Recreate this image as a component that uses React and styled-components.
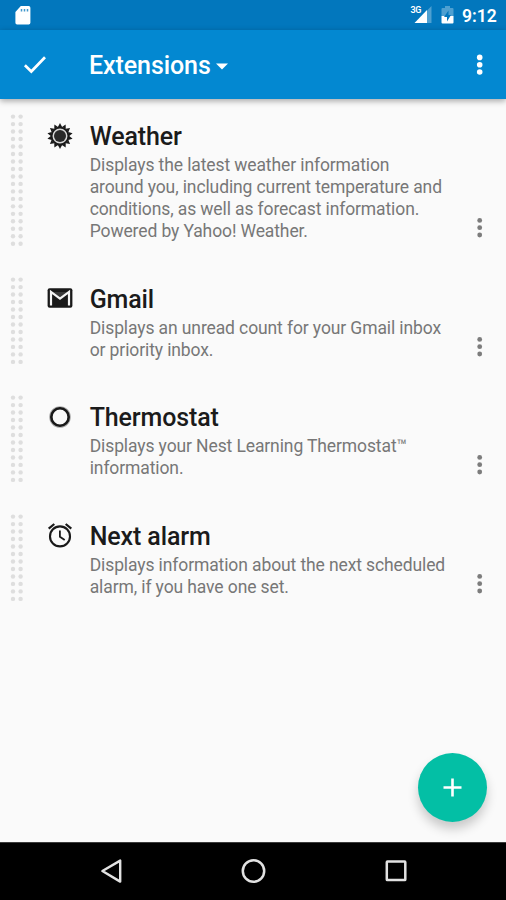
import React from 'react';
import styled, { createGlobalStyle } from 'styled-components';

const GlobalStyle = createGlobalStyle`
  * {
    box-sizing: border-box;
  }

  body {
    margin: 0;
    background: #fafafa;
    font-family: Roboto, sans-serif;
  }

  svg {
    display: block;
  }
`;

const Screen = styled.div`
  display: flex;
  flex-direction: column;
  width: 506px;
  height: 900px;
  overflow: hidden;
  background: #fafafa;
`;

const StatusBar = styled.header`
  display: flex;
  align-items: center;
  justify-content: space-between;
  height: 30px;
  padding: 0 9px 0 14px;
  background: #0277bd;
  color: #fff;
`;

const StatusIcons = styled.div`
  display: flex;
  align-items: center;
`;

const NetworkLabel = styled.span`
  align-self: flex-start;
  margin-right: -7px;
  padding-top: 7px;
  font-size: 9px;
  font-weight: 600;
  line-height: 9px;
  letter-spacing: -0.4px;
`;

const BatterySlot = styled.div`
  margin-left: 9px;
`;

const Clock = styled.span`
  width: 35px;
  margin-left: 8px;
  padding-top: 2px;
  font-size: 17.5px;
  font-weight: 600;
  line-height: 30px;
  white-space: nowrap;
`;

const AppBar = styled.nav`
  display: flex;
  align-items: center;
  height: 69px;
  padding: 0 14px 0 22px;
  background: #0388d1;
  color: #fff;
  box-shadow: 0 2px 6px rgba(0, 0, 0, 0.34);
  z-index: 1;
`;

const IconButton = styled.button`
  display: flex;
  align-items: center;
  justify-content: center;
  padding: 0;
  border: none;
  background: none;
  color: inherit;
  cursor: pointer;
`;

const Dropdown = styled.button`
  display: flex;
  align-items: center;
  gap: 5px;
  margin: 2px auto 0 41px;
  padding: 0;
  border: none;
  background: none;
  color: inherit;
  font-family: inherit;
  font-size: 25px;
  font-weight: 500;
  line-height: 32px;
  letter-spacing: -0.08px;
  cursor: pointer;
`;

const List = styled.ul`
  flex: 1;
  margin: 0;
  padding: 0;
  list-style: none;
`;

const Row = styled.li`
  display: flex;
  height: ${(props) => 74.6 + props.$lines * 22}px;
  padding: 15px 14px 15.6px 10px;
`;

const IconSlot = styled.div`
  display: flex;
  align-items: center;
  justify-content: center;
  width: 28px;
  height: 28px;
  margin: 7.6px 16px 0 21.7px;
  color: #191919;
`;

const Details = styled.div`
  flex: 1;
  padding-top: 7px;
`;

const Title = styled.h2`
  margin: 0;
  font-size: 25px;
  font-weight: 500;
  line-height: 32px;
  letter-spacing: -0.12px;
  color: #1b1b1b;
`;

const Description = styled.p`
  margin: 1px 0 0;
  font-size: 17.5px;
  line-height: 22px;
  letter-spacing: -0.11px;
  color: #777;
  white-space: pre;
`;

const RowMenu = styled(IconButton)`
  align-self: flex-end;
  margin-bottom: 6px;
  color: #7c7c7c;
`;

const AddButton = styled(IconButton)`
  align-self: flex-end;
  flex-shrink: 0;
  width: 69px;
  height: 69px;
  margin: 0 19px 20px 0;
  border-radius: 50%;
  background: #03bfa5;
  color: #fff;
  box-shadow: 0 7px 11px rgba(0, 0, 0, 0.2);
`;

const NavBar = styled.footer`
  display: flex;
  justify-content: space-between;
  height: 58px;
  padding: 14px 96px 0;
  background: #000;
  border-top: 1px solid #3c3c3c;
  color: #e2e2e2;
`;

const SdCardIcon = () => (
  <svg width="18" height="20" viewBox="0 0 18 20">
    <path
      d="M6.8 1h7.9a1.7 1.7 0 0 1 1.7 1.7v15a1.7 1.7 0 0 1-1.7 1.7H3.1a1.7 1.7 0 0 1-1.7-1.7V7z"
      fill="#fff"
    />
    <path d="M7.5 4v2.6M10.5 4v2.6M13.5 4v2.6" stroke="#0277bd" strokeWidth="1.5" opacity=".75" />
  </svg>
);

const SignalIcon = () => (
  <svg width="18" height="18" viewBox="0 0 18 18">
    <path d="M13 4.5 17.5 0v17H13z" fill="#fff" opacity=".3" />
    <path d="M.5 17 13 4v13z" fill="#fff" />
  </svg>
);

const BatteryIcon = () => (
  <svg width="13" height="18" viewBox="0 0 13 18">
    <path d="M4 0h5v2h2.5q1 0 1 1v7H.5V3q0-1 1-1H4z" fill="#fff" opacity=".3" />
    <path d="M.5 10h12v6.5q0 1-1 1h-10q-1 0-1-1z" fill="#fff" />
    <path d="M7.5 4.5 3 11h3v4.5L10 9H7.5z" fill="#0277bd" />
  </svg>
);

const CheckIcon = () => (
  <svg width="26" height="26" viewBox="0 0 26 26" fill="none" stroke="#fff" strokeWidth="2.7">
    <path d="M2.9 13.3 9.3 19.5 23 5.2" />
  </svg>
);

const CaretIcon = () => (
  <svg width="12" height="8" viewBox="0 0 12 8">
    <path d="M0 1.4h12L6 7.4z" fill="currentColor" />
  </svg>
);

const MoreIcon = ({ radius = 2.4 }) => (
  <svg width="24" height="24" viewBox="0 0 24 24" fill="currentColor">
    <circle cx="11.7" cy="4.4" r={radius} />
    <circle cx="11.7" cy="11.7" r={radius} />
    <circle cx="11.7" cy="19" r={radius} />
  </svg>
);

const Grip = ({ count }) => (
  <svg width="14" height={count * 7.5} fill="#dedede">
    {Array.from({ length: count }, (_, i) => (
      <g key={i}>
        <circle cx="3" cy={2.6 + i * 7.48} r="2.2" />
        <circle cx="10.6" cy={2.6 + i * 7.48} r="2.2" />
      </g>
    ))}
  </svg>
);

const SunIcon = () => (
  <svg width="26" height="26" viewBox="-13 -13 26 26">
    {Array.from({ length: 14 }, (_, i) => (
      <path
        key={i}
        d="M-2.1-9 0-12.9 2.1-9z"
        fill="#191919"
        transform={`rotate(${(i * 360) / 14})`}
      />
    ))}
    <circle r="8.5" fill="#d8d8d8" stroke="#191919" strokeWidth="2" />
    <circle r="6" fill="#292929" />
  </svg>
);

const GmailIcon = () => (
  <svg width="26" height="22" viewBox="0 0 26 22">
    <rect x=".6" y="1.2" width="24.8" height="19.6" rx="2" fill="#191919" />
    <path d="M5 5h16L13 11z" fill="#3a3a3a" />
    <path
      d="M4 18.6V4.9L13 11.7l9-6.8v13.7"
      fill="none"
      stroke="#f5f5f5"
      strokeWidth="2.2"
    />
  </svg>
);

const ThermostatIcon = () => (
  <svg width="26" height="26" viewBox="0 0 26 26" fill="none">
    <circle cx="13" cy="13" r="9.3" stroke="#aaa" strokeWidth="3" />
    <circle cx="13" cy="13" r="8.7" stroke="#191919" strokeWidth="2.6" />
  </svg>
);

const AlarmIcon = () => (
  <svg width="26" height="26" viewBox="0 0 26 26" fill="none" stroke="currentColor" strokeWidth="2.1">
    <circle cx="13" cy="14.4" r="10" />
    <path d="M1.7 6.7 7.3 2M24.3 6.7 18.7 2" strokeWidth="2.2" />
    <path d="M12.9 8.6v6.2l4.8 3.3" strokeWidth="1.8" />
  </svg>
);

const PlusIcon = () => (
  <svg width="20" height="20" viewBox="0 0 20 20" stroke="#fff" strokeWidth="2.6">
    <path d="M9.5 .5v18M.5 9.5h18" />
  </svg>
);

const BackIcon = () => (
  <svg width="30" height="28" viewBox="0 0 30 28" fill="none" stroke="currentColor" strokeWidth="2.4">
    <path d="M24.2 3.6v21L6.4 14z" strokeLinejoin="round" />
  </svg>
);

const HomeIcon = () => (
  <svg width="28" height="28" viewBox="0 0 28 28" fill="none" stroke="currentColor" strokeWidth="2.5">
    <circle cx="13.5" cy="14" r="10.7" />
  </svg>
);

const RecentsIcon = () => (
  <svg width="28" height="28" viewBox="0 0 28 28" fill="none" stroke="currentColor" strokeWidth="2.5">
    <rect x="4.8" y="4.6" width="18.5" height="18.5" rx=".6" />
  </svg>
);

const extensions = [
  {
    id: 'weather',
    title: 'Weather',
    icon: <SunIcon />,
    lines: [
      'Displays the latest weather information',
      'around you, including current temperature and',
      'conditions, as well as forecast information.',
      'Powered by Yahoo! Weather.',
    ],
    dots: 18,
  },
  {
    id: 'gmail',
    title: 'Gmail',
    icon: <GmailIcon />,
    lines: ['Displays an unread count for your Gmail inbox', 'or priority inbox.'],
    dots: 12,
  },
  {
    id: 'thermostat',
    title: 'Thermostat',
    icon: <ThermostatIcon />,
    lines: ['Displays your Nest Learning Thermostat™', 'information.'],
    dots: 12,
  },
  {
    id: 'alarm',
    title: 'Next alarm',
    icon: <AlarmIcon />,
    lines: ['Displays information about the next scheduled', 'alarm, if you have one set.'],
    dots: 12,
  },
];

const App = () => (
  <>
    <GlobalStyle />
    <Screen>
      <StatusBar>
        <SdCardIcon />
        <StatusIcons>
          <NetworkLabel>3G</NetworkLabel>
          <SignalIcon />
          <BatterySlot>
            <BatteryIcon />
          </BatterySlot>
          <Clock>9:12</Clock>
        </StatusIcons>
      </StatusBar>
      <AppBar>
        <IconButton aria-label="Done">
          <CheckIcon />
        </IconButton>
        <Dropdown>
          Extensions
          <CaretIcon />
        </Dropdown>
        <IconButton aria-label="More options">
          <MoreIcon radius={2.8} />
        </IconButton>
      </AppBar>
      <List>
        {extensions.map((item) => (
          <Row key={item.id} $lines={item.lines.length}>
            <Grip count={item.dots} />
            <IconSlot>{item.icon}</IconSlot>
            <Details>
              <Title>{item.title}</Title>
              <Description>{item.lines.join('\n')}</Description>
            </Details>
            <RowMenu aria-label={`${item.title} options`}>
              <MoreIcon />
            </RowMenu>
          </Row>
        ))}
      </List>
      <AddButton aria-label="Add extension">
        <PlusIcon />
      </AddButton>
      <NavBar>
        <BackIcon />
        <HomeIcon />
        <RecentsIcon />
      </NavBar>
    </Screen>
  </>
);

export default App;
